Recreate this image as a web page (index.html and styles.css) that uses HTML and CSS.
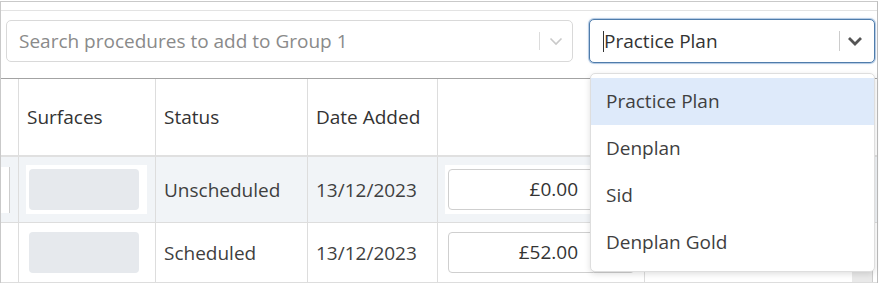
FILE: index.html
```html
<!DOCTYPE html>
<html lang="en">
<head>
<meta charset="utf-8">
<title>Procedures</title>
<link rel="stylesheet" href="styles.css">
</head>
<body>
<div class="panel">
  <div class="panel-head"></div>
  <div class="toolbar">
    <div class="search">
      <span class="placeholder">Search procedures to add to Group 1</span>
      <span class="sep"></span>
      <svg class="chev chev-light" width="14" height="9" viewBox="0 0 14 9"><path d="M1.5 1.5 L7 7 L12.5 1.5" fill="none" stroke="#c9c9c9" stroke-width="1.6"/></svg>
    </div>
    <div class="plan-wrap">
      <div class="plan">
        <span class="caret"></span>
        <span class="plan-value">Practice Plan</span>
        <span class="sep sep-dark"></span>
        <svg class="chev chev-dark" width="16" height="10" viewBox="0 0 16 10"><path d="M2 2 L8 8 L14 2" fill="none" stroke="#555" stroke-width="2.8"/></svg>
      </div>
      <ul class="menu">
        <li class="active">Practice Plan</li>
        <li>Denplan</li>
        <li>Sid</li>
        <li>Denplan Gold</li>
      </ul>
    </div>
  </div>
  <table class="grid">
    <thead>
      <tr>
        <th class="c0"></th>
        <th class="c1">Surfaces</th>
        <th class="c2">Status</th>
        <th class="c3">Date Added</th>
        <th class="c4"></th>
        <th class="c5"></th>
      </tr>
    </thead>
    <tbody>
      <tr class="row-active">
        <td class="c0"><div class="stub"></div></td>
        <td><div class="cellbox"><div class="surface"></div></div></td>
        <td>Unscheduled</td>
        <td>13/12/2023</td>
        <td><div class="cellbox"><div class="price"><span class="price-input">£0.00</span><span class="price-btn"></span></div></div></td>
        <td class="c5"></td>
      </tr>
      <tr>
        <td class="c0"></td>
        <td><div class="cellbox"><div class="surface"></div></div></td>
        <td>Scheduled</td>
        <td>13/12/2023</td>
        <td><div class="cellbox"><div class="price"><span class="price-input">£52.00</span><span class="price-btn"></span></div></div></td>
        <td class="c5"><div class="side-btn"></div></td>
      </tr>
    </tbody>
  </table>
</div>
</body>
</html>
```

FILE: styles.css
```css
* { box-sizing: border-box; }

html, body {
  margin: 0;
  padding: 0;
  background: #ffffff;
}

body {
  font-family: "Open Sans", "Liberation Sans", sans-serif;
  font-size: 19px;
  color: #444;
}

.panel {
  margin-top: 1px;
  width: 878px;
  border-top: 1px solid #c9c9c9;
  border-left: 1px solid #c9c9c9;
  border-right: 1px solid #bdbdbd;
}

.panel-head {
  height: 9px;
  border-bottom: 1px solid #e3e3e3;
}

.toolbar {
  display: flex;
  align-items: flex-start;
  gap: 16px;
  height: 67px;
  padding: 8px 1px 0 5px;
}

.search {
  margin-top: 1px;
  width: 567px;
  height: 42px;
  border: 1px solid #d9d9d9;
  border-radius: 5px;
  display: flex;
  align-items: center;
  padding: 0 9px 0 12px;
  background: #fff;
}

.placeholder {
  flex: 1;
  color: #8a8a8a;
  white-space: nowrap;
}

.sep {
  width: 1px;
  height: 18px;
  background: #dcdcdc;
}

.sep-dark {
  height: 20px;
  background: #cccccc;
}

.chev { display: block; }
.chev-light { margin-left: 9px; }
.chev-dark { margin-left: 7px; }

.plan-wrap {
  position: relative;
  width: 286px;
}

.plan {
  height: 44px;
  border: 1px solid #4f7cab;
  border-radius: 5px;
  box-shadow: 0 0 0 1px rgba(120, 160, 205, 0.45), 0 0 3px rgba(90, 140, 200, 0.35);
  display: flex;
  align-items: center;
  padding: 0 11px 0 13px;
  background: #fff;
}

.caret {
  width: 1px;
  height: 21px;
  background: #333;
}

.plan-value {
  flex: 1;
  color: #333;
  white-space: nowrap;
}

.menu {
  position: absolute;
  top: 54px;
  left: 1px;
  width: 285px;
  margin: 0;
  padding: 4px 0 5px;
  list-style: none;
  background: #fff;
  border: 1px solid #dedede;
  border-radius: 5px;
  box-shadow: 0 2px 6px rgba(0, 0, 0, 0.13);
  z-index: 5;
}

.menu li {
  height: 47px;
  line-height: 47px;
  padding-left: 15px;
  color: #3f3f3f;
}

.menu li.active {
  background: #deeafa;
}

.grid {
  width: 876px;
  table-layout: fixed;
  border-collapse: separate;
  border-spacing: 0;
  border-top: 1px solid #a3a3a3;
}

.grid th,
.grid td {
  padding: 0 8px;
  border-right: 1px solid #dddddd;
  vertical-align: middle;
  white-space: nowrap;
  overflow: hidden;
}

.grid th {
  height: 78px;
  font-weight: normal;
  color: #333;
  text-align: left;
  border-bottom: 2px solid #e0e0e0;
}

.grid th.c0 { width: 18px; }
.grid th.c1 { width: 137px; }
.grid th.c2 { width: 152px; }
.grid th.c3 { width: 130px; }
.grid th.c4 { width: 207px; }
.grid th.c5 { width: 232px; }

.grid .c5 { border-right: none; }

.grid td {
  height: 60px;
  border-bottom: 1px solid #dddddd;
  color: #3f3f3f;
}

.grid td.c0 { padding: 0; }

.row-active td {
  height: 66px;
  background: #f1f4f7;
}

.stub {
  width: 9px;
  height: 46px;
  background: #fff;
  border-right: 1px solid #cdcdcd;
}

.cellbox {
  display: inline-block;
  vertical-align: middle;
  margin-left: 2px;
}

.row-active .cellbox {
  background: #fff;
  margin-left: -1px;
  padding: 4px 8px 4px 3px;
}

.surface {
  width: 110px;
  height: 41px;
  border-radius: 4px;
  background: #e6e9ed;
}

.price {
  display: flex;
}

.price-input {
  width: 146px;
  height: 41px;
  line-height: 39px;
  border: 1px solid #cfcfcf;
  border-radius: 4px 0 0 4px;
  background: #fff;
  text-align: right;
  padding-right: 15px;
  color: #333;
}

.price-btn {
  width: 40px;
  height: 41px;
  border: 1px solid #cfcfcf;
  border-left: none;
  border-radius: 0 4px 4px 0;
  background: #f3f3f3;
}

.side-btn {
  margin-left: auto;
  margin-right: -4px;
  width: 21px;
  height: 50px;
  margin-top: 8px;
  background: #e9e9e9;
  border-right: 1px solid #cccccc;
}
```
